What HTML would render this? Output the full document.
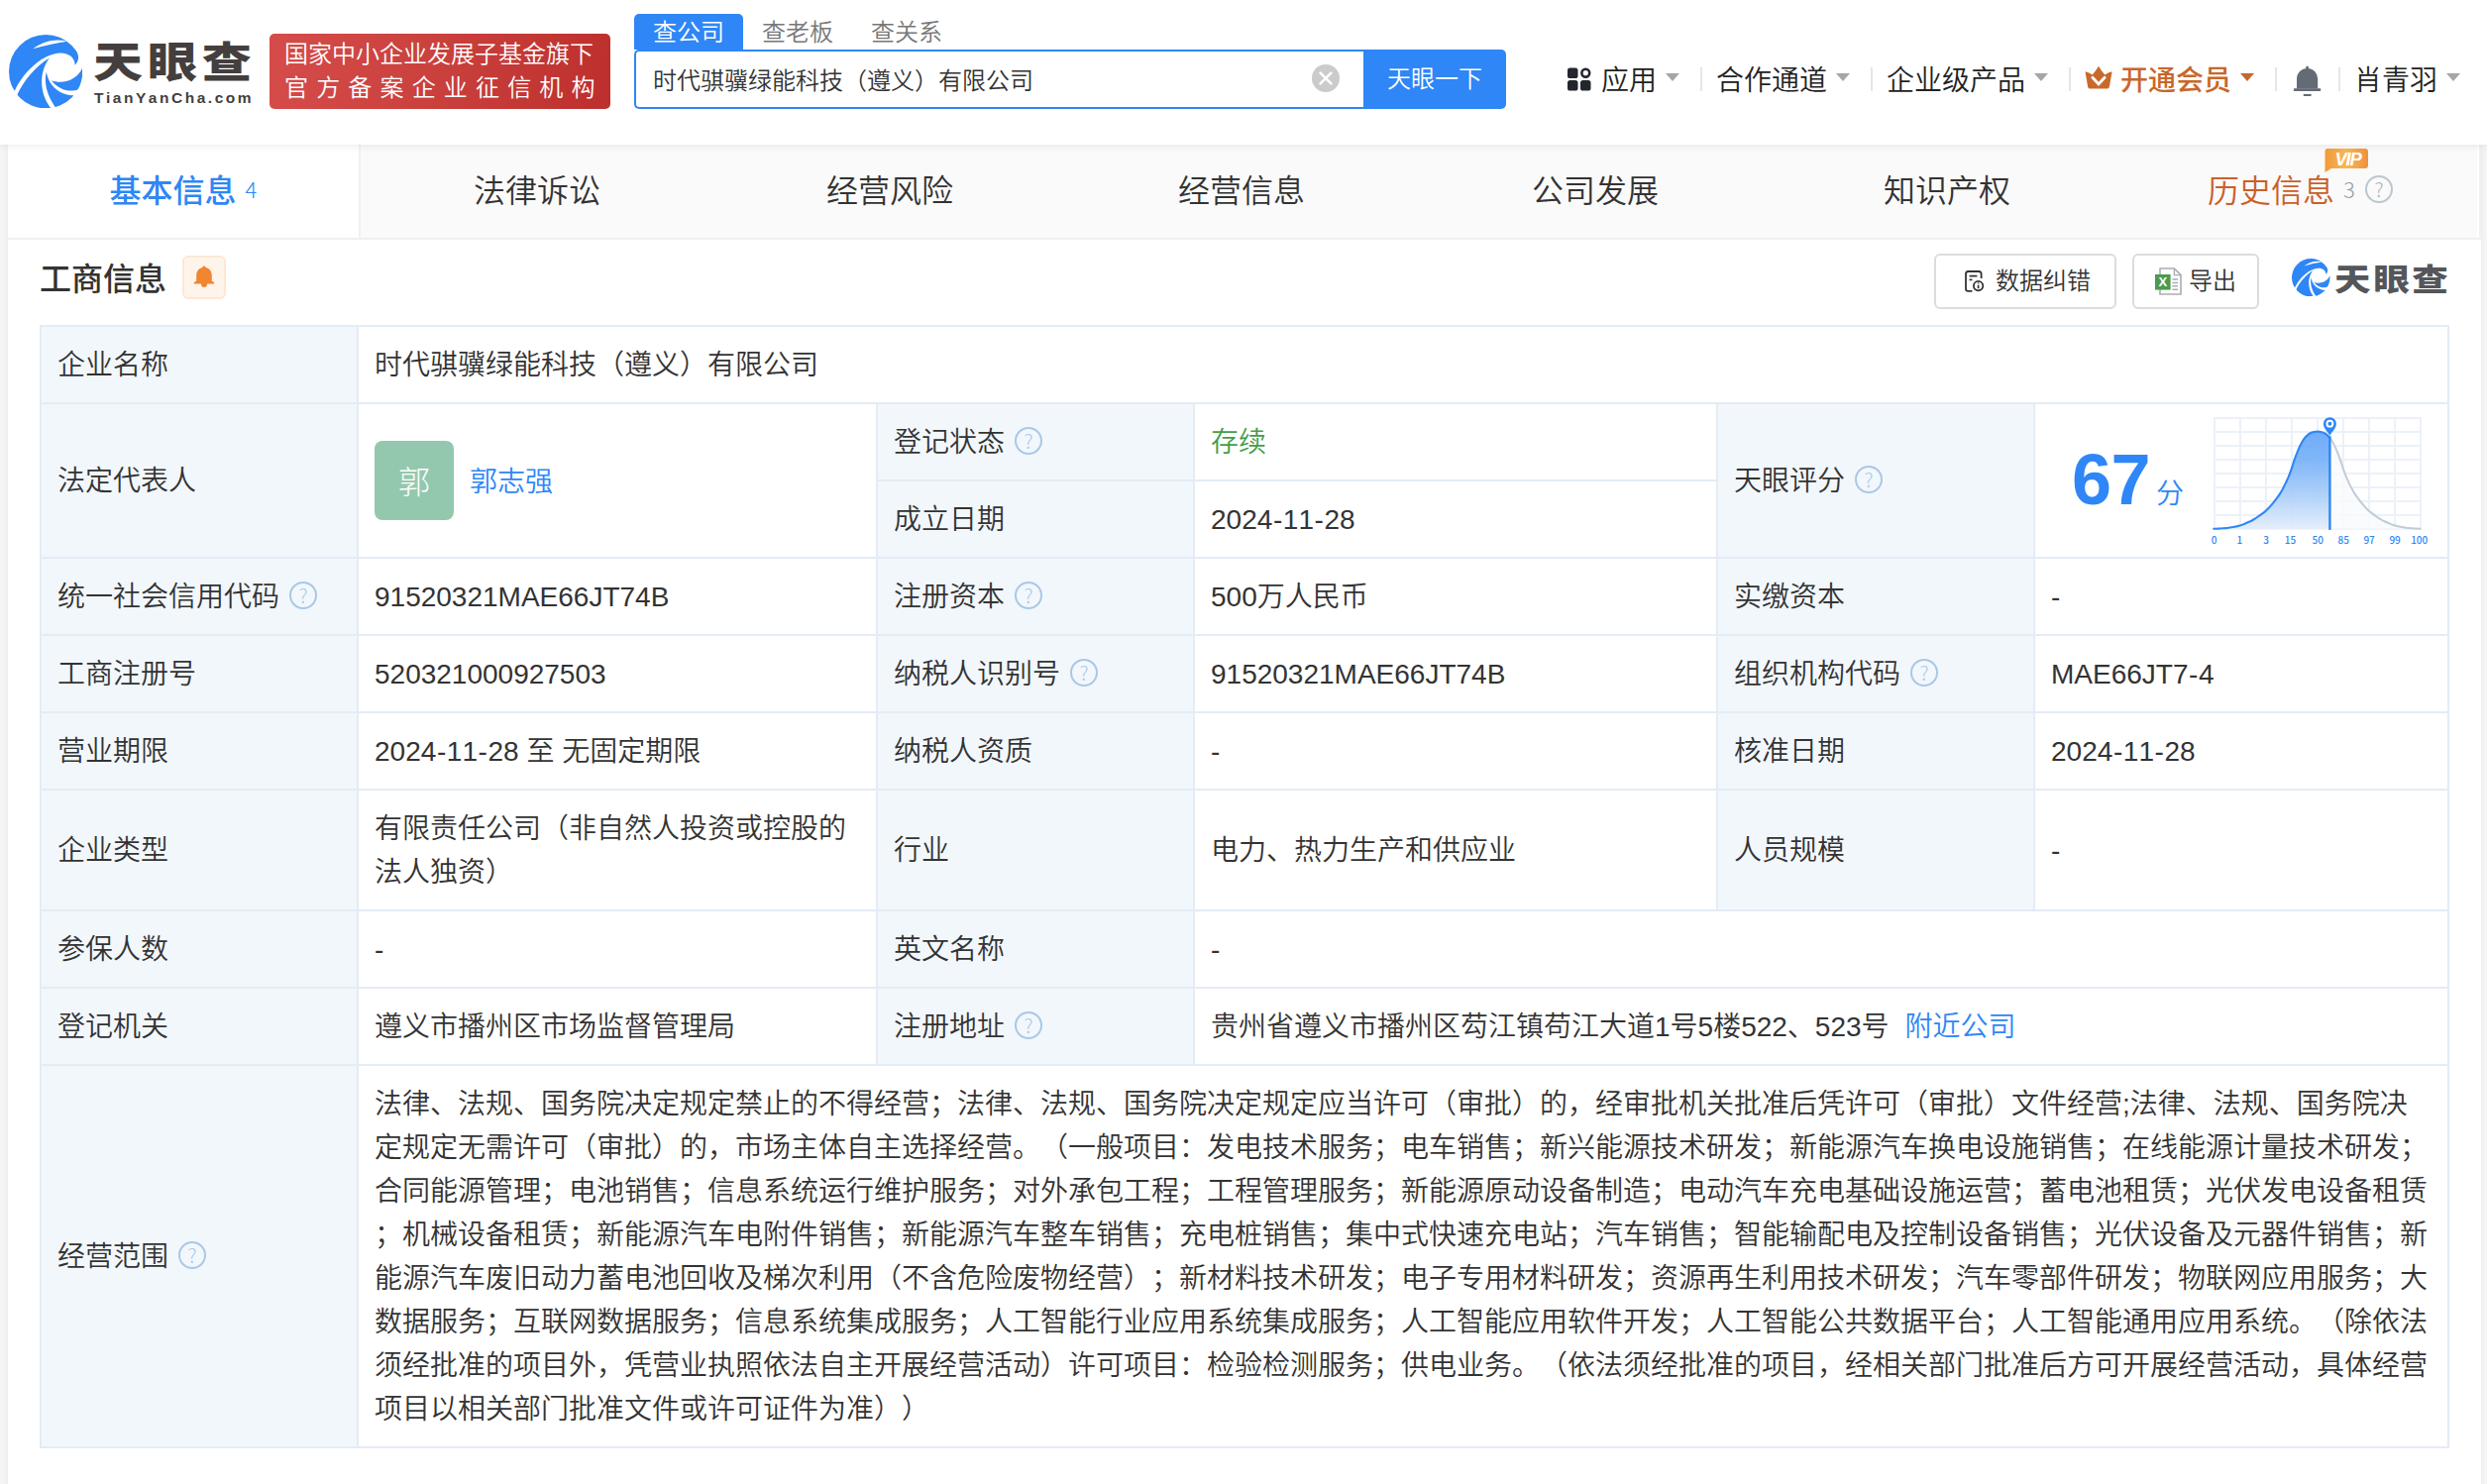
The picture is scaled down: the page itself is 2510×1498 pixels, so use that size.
<!DOCTYPE html>
<html lang="zh-CN">
<head>
<meta charset="utf-8">
<title>时代骐骥绿能科技（遵义）有限公司 - 天眼查</title>
<style>
*{box-sizing:border-box;margin:0;padding:0}
html,body{width:2510px;height:1498px;overflow:hidden}
body{text-spacing-trim:space-all;font-kerning:none;background:#f6f6f6;font-family:"Liberation Sans","Noto Sans CJK SC DemiLight","Noto Sans CJK SC",sans-serif;color:#333;position:relative;-webkit-font-smoothing:antialiased}
.abs{position:absolute;white-space:nowrap}
/* header */
#hd{position:absolute;left:0;top:0;width:2510px;height:146px;background:#fff;box-shadow:0 2px 7px rgba(0,0,0,.07);z-index:5}
.logotxt{left:94px;top:25.5px;font-size:42.5px;line-height:68px;font-weight:900;color:#443f3e;letter-spacing:4px;transform-origin:0 50%;transform:scaleX(1.18);font-family:"Noto Sans CJK SC",sans-serif}
.logosub{left:95px;top:88px;font-size:15.5px;line-height:22px;font-weight:700;color:#443f3e;letter-spacing:2.53px}
#red{position:absolute;left:272px;top:34px;width:344px;height:76px;border-radius:5px;background:linear-gradient(100deg,#d64c4a 0%,#c9403d 50%,#bd2f2d 100%);color:#fff;font-size:24px}
#red div{position:absolute;left:15px;white-space:nowrap;line-height:34px}
.stab{top:14px;width:110px;height:36px;line-height:37px;text-align:center;font-size:24px;color:#777}
.stab.on{background:#2f86f6;color:#fff;border-radius:5px 5px 0 0}
#sbox{position:absolute;left:640px;top:50px;width:738px;height:60px;border:2px solid #2f86f6;border-right:0;border-radius:5px 0 0 5px;background:#fff;font-size:24px;line-height:60px;padding-left:17px;white-space:nowrap;color:#333}
#sbtn{position:absolute;left:1376px;top:50px;width:144px;height:60px;background:#2f86f6;border-radius:0 5px 5px 0;color:#fff;font-size:24px;line-height:59px;text-align:center}
.nav{top:60px;font-size:28px;line-height:44px;color:#222}
.sep{position:absolute;top:68px;width:2px;height:24px;background:#e3e6ec}
.car{position:absolute;top:74.4px;width:0;height:0;border-left:7px solid transparent;border-right:7px solid transparent;border-top:8.8px solid #a6a6a6}
/* tabs */
#tabs{position:absolute;left:8px;top:146px;width:2496px;height:96px;background:#fafafa;border-bottom:2px solid #f0f0f0;border-right:2px solid #f0f0f0}
#tabs:after{content:"";position:absolute;left:2492px;top:0;width:2px;height:94px;background:#fff}
.tab{position:absolute;top:0;height:94px;line-height:94px;text-align:center;font-size:32px;color:#333;white-space:nowrap}
.tab.on{left:0;width:356px;background:#fff;border-right:2px solid #f0f0f0;color:#2f86f6;font-weight:500;font-family:"Liberation Sans","Noto Sans CJK SC",sans-serif}
#main{position:absolute;left:8px;top:242px;width:2496px;height:1270px;background:#fff}
#wrap{position:absolute;left:8px;top:146px;width:2496px;height:1366px;background:#fff;box-shadow:0 0 7px rgba(0,0,0,.07)}
/* table */
table{position:absolute;left:40px;top:328px;width:2430px;border-collapse:collapse;table-layout:fixed;font-size:28px;line-height:44px}
td{border:2px solid #e4ecf5;padding:17px 16px 15px;vertical-align:middle;background:#fff;color:#333;white-space:nowrap;overflow:hidden}
td.l{background:#f2f7fc}
.q{display:inline-block;width:28px;height:28px;border:2px solid #a9c8e6;border-radius:50%;vertical-align:top;margin:6px 0 0 10px;color:#a9c8e6;font-size:20px;line-height:24px;height:28px;text-align:center;font-weight:300;font-style:normal;font-family:"Noto Sans CJK SC",sans-serif;overflow:hidden}
a{color:#2f86f6;text-decoration:none}
.h{margin:0 .6px}
</style>
</head>
<body>
<div id="hd">
<svg class="abs" style="left:8.7px;top:34.7px" width="74.4" height="74.4" viewBox="140 140 1200 1200"><defs><clipPath id="lc"><circle cx="740" cy="740" r="600"/></clipPath></defs><g clip-path="url(#lc)" fill="#2f86f6"><path d="M235,1050 L0,1050 L0,0 L1100,0 L1080,250 C1180,300 1260,380 1270,500 C1272,560 1250,600 1215,635 C1215,520 1120,440 980,440 C700,450 400,720 235,1050Z"/><path d="M530,370 C700,245 900,195 1090,248 C900,278 720,312 530,370Z" fill="#fff"/><path d="M800,520 C600,640 380,880 275,1120 L200,1500 L820,1500 L820,1335 C640,1100 620,760 800,520Z"/><path d="M1335,680 C1270,850 1050,960 830,885 C950,1030 1130,1090 1265,1030 L1500,1030 L1500,680Z"/><path d="M750,745 C700,950 780,1150 895,1320 L895,1500 L1300,1500 L1195,1130 C1000,1130 790,1000 750,745Z"/></g></svg>
<div class="abs logotxt">天眼查</div>
<div class="abs logosub">TianYanCha.com</div>
<div id="red"><div style="top:4px">国家中小企业发展子基金旗下</div><div style="top:37.5px;letter-spacing:8.17px">官方备案企业征信机构</div></div>
<div class="abs stab on" style="left:640px">查公司</div>
<div class="abs stab" style="left:750px">查老板</div>
<div class="abs stab" style="left:860px">查关系</div>
<div id="sbox">时代骐骥绿能科技（遵义）有限公司</div>
<svg class="abs" style="left:1324px;top:65px" width="28" height="28" viewBox="0 0 28 28"><circle cx="14" cy="14" r="14" fill="#cbcbcb"/><path d="M8.6 8.6L19.4 19.4M19.4 8.6L8.6 19.4" stroke="#fff" stroke-width="2.6" stroke-linecap="round"/></svg>
<div id="sbtn">天眼一下</div>
<svg class="abs" style="left:1582px;top:68px" width="24" height="24" viewBox="0 0 24 24"><rect x="0" y="0.5" width="10.5" height="10.5" rx="2.6" fill="#23262d"/><rect x="0" y="13" width="10.5" height="10.5" rx="2.6" fill="#23262d"/><rect x="13" y="13" width="10.5" height="10.5" rx="2.6" fill="#23262d"/><circle cx="18.3" cy="5.7" r="3.9" fill="none" stroke="#23262d" stroke-width="2.6"/></svg>
<div class="abs nav" style="left:1616px">应用</div><i class="car" style="left:1681px"></i><i class="sep" style="left:1716px"></i>
<div class="abs nav" style="left:1732px">合作通道</div><i class="car" style="left:1853px"></i><i class="sep" style="left:1888px"></i>
<div class="abs nav" style="left:1904px">企业级产品</div><i class="car" style="left:2053px"></i><i class="sep" style="left:2088px"></i>
<svg class="abs" style="left:2104px;top:66px" width="28" height="24" viewBox="0 0 28 24"><path d="M0.5 6.2 Q4.6 7.2 7.7 9.4 Q11.4 5.6 14 0.8 Q16.6 5.6 20.3 9.4 Q23.4 7.2 27.6 6.2 L24.9 21.4 Q24.5 23.6 22.4 23.6 L5.6 23.6 Q3.5 23.6 3.1 21.4Z" fill="#c8692b"/><path d="M7.9 12.3 L14 18.9 L20.1 12.3" fill="none" stroke="#fff" stroke-width="2.9" stroke-linecap="round" stroke-linejoin="miter"/></svg>
<div class="abs nav" style="left:2140px;top:57px;color:#c8672a;font-weight:500;font-family:'Noto Sans CJK SC',sans-serif">开通会员</div><i class="car" style="left:2261px;border-top-color:#c8672a"></i><i class="sep" style="left:2296px"></i>
<svg class="abs" style="left:2314px;top:66px" width="30" height="32" viewBox="0 0 30 32"><path d="M4 23.6 V13.6 A10.6 10.6 0 0 1 25.2 13.6 V23.6Z" fill="#636b76"/><rect x="0.9" y="23.2" width="27.3" height="2.7" rx="0.6" fill="#636b76"/><rect x="13.3" y="0.8" width="2.6" height="3.4" rx="1" fill="#636b76"/><rect x="10.7" y="29" width="7.9" height="1.9" rx="0.4" fill="#636b76"/></svg>
<i class="sep" style="left:2360px"></i>
<div class="abs nav" style="left:2376px">肖青羽</div><i class="car" style="left:2469px"></i>
</div>
<div id="wrap"></div>
<div id="tabs">
<div class="tab on">基本信息<span style="font-family:'Noto Sans CJK SC',sans-serif;font-weight:300;font-size:22px;margin-left:9px;position:relative;top:-4px">4</span></div>
<div class="tab" style="left:356px;width:356px">法律诉讼</div>
<div class="tab" style="left:712px;width:356px">经营风险</div>
<div class="tab" style="left:1067px;width:356px">经营信息</div>
<div class="tab" style="left:1424px;width:356px">公司发展</div>
<div class="tab" style="left:1779px;width:356px">知识产权</div>
<div class="tab" style="left:2220px;width:auto;color:#c8602a">历史信息<span style="font-family:'Noto Sans CJK SC',sans-serif;font-weight:300;font-size:22px;margin-left:9px;color:#999;position:relative;top:-4px">3</span></div>
<div class="abs" style="left:2379px;top:31px;width:28px;height:28px;border:2px solid #bcc6cf;border-radius:50%;color:#a8b0b8;font-size:20px;line-height:24px;text-align:center;font-family:'Noto Sans CJK SC',sans-serif;font-weight:300">?</div>
<svg class="abs" style="left:2338px;top:3px" width="46" height="26" viewBox="0 0 46 26"><defs><linearGradient id="vg" x1="0" y1="0" x2="1" y2="0"><stop offset="0" stop-color="#f09a3c"/><stop offset=".5" stop-color="#f8b856"/><stop offset="1" stop-color="#f0913c"/></linearGradient></defs><path d="M3 1 H41 Q44 1 44 4 V18 Q44 21 41 21 H7 L0.5 25 V4 Q0.5 1 3 1Z" fill="url(#vg)"/><text x="23.5" y="17.6" text-anchor="middle" font-family="Liberation Sans,sans-serif" font-weight="700" font-style="italic" font-size="18.5" letter-spacing="-1.2" fill="#fff">VIP</text></svg>
</div>
<div id="main">
<div class="abs" style="left:32px;top:14px;font-size:32px;line-height:46px;font-weight:500;color:#333;font-family:'Noto Sans CJK SC',sans-serif">工商信息</div>
<div class="abs" style="left:176px;top:16px;width:44px;height:44px;border:2px solid #fde8d5;border-radius:6px;background:#fef4ea"></div>
<svg class="abs" style="left:187px;top:25.6px" width="22" height="24" viewBox="0 0 22 24"><path d="M11 0.6 C11.9 0.6 12.5 1.2 12.6 2 C16.4 2.8 18.8 6 18.8 10 L18.8 15.8 L20.4 16.6 Q21.2 17 21.2 17.8 L21.2 18.6 L0.8 18.6 L0.8 17.8 Q0.8 17 1.6 16.6 L3.2 15.8 L3.2 10 C3.2 6 5.6 2.8 9.4 2 C9.5 1.2 10.1 0.6 11 0.6Z M7.8 18.4 L14.2 18.4 C14 20.6 12.8 22 11 22 C9.2 22 8 20.6 7.8 18.4Z" fill="#f08632"/></svg>
<div class="abs" style="left:1944px;top:14px;width:184px;height:56px;border:2px solid #dcdcdc;border-radius:6px"></div>
<svg class="abs" style="left:1975px;top:31px" width="20" height="22" viewBox="0 0 20 22"><path d="M16.6 8 V3.4 Q16.6 1 14.2 1 H3.4 Q1 1 1 3.4 V18.4 Q1 20.8 3.4 20.8 H7.4" fill="none" stroke="#333" stroke-width="1.8"/><path d="M4.6 5.6 H12.4 M4.6 9.4 H7.4" stroke="#333" stroke-width="1.8"/><circle cx="13.6" cy="15.6" r="4.7" fill="none" stroke="#333" stroke-width="1.8"/><path d="M13.6 14.8 V18.2 M13.6 12.6 V13.6" stroke="#333" stroke-width="1.7"/></svg>
<div class="abs" style="left:2006px;top:20px;font-size:24px;line-height:44px;color:#333">数据纠错</div>
<div class="abs" style="left:2144px;top:14px;width:128px;height:56px;border:2px solid #dcdcdc;border-radius:6px"></div>
<svg class="abs" style="left:2167px;top:28px" width="27" height="28" viewBox="0 0 27 28"><path d="M5 1 H19.4 L26 7.6 V27 H5Z" fill="#fff" stroke="#a9adb3" stroke-width="1.6"/><path d="M19.4 1 V7.6 H26" fill="none" stroke="#a9adb3" stroke-width="1.4"/><path d="M17.4 12 H23 M17.4 15.4 H23 M17.4 18.8 H23 M17.4 22.2 H23" stroke="#a9adb3" stroke-width="1.5"/><rect x="0" y="7" width="15.6" height="15.6" fill="#4a9a4f"/><text x="7.8" y="19.4" text-anchor="middle" font-family="Liberation Sans,sans-serif" font-weight="700" font-size="13" fill="#fff">X</text></svg>
<div class="abs" style="left:2201px;top:20px;font-size:24px;line-height:44px;color:#333">导出</div>
<svg class="abs" style="left:2305px;top:18.8px" width="38.5" height="38.5" viewBox="140 140 1200 1200"><g clip-path="url(#lc)" fill="#2f86f6"><path d="M235,1050 L0,1050 L0,0 L1100,0 L1080,250 C1180,300 1260,380 1270,500 C1272,560 1250,600 1215,635 C1215,520 1120,440 980,440 C700,450 400,720 235,1050Z"/><path d="M530,370 C700,245 900,195 1090,248 C900,278 720,312 530,370Z" fill="#fff"/><path d="M800,520 C600,640 380,880 275,1120 L200,1500 L820,1500 L820,1335 C640,1100 620,760 800,520Z"/><path d="M1335,680 C1270,850 1050,960 830,885 C950,1030 1130,1090 1265,1030 L1500,1030 L1500,680Z"/><path d="M750,745 C700,950 780,1150 895,1320 L895,1500 L1300,1500 L1195,1130 C1000,1130 790,1000 750,745Z"/></g></svg>
<div class="abs" style="left:2348px;top:7px;font-size:31px;line-height:62px;font-weight:900;color:#55565a;letter-spacing:2.2px;transform-origin:0 50%;transform:scaleX(1.18);font-family:'Noto Sans CJK SC',sans-serif">天眼查</div>
</div>
<table id="tb"><colgroup><col style="width:320px"><col style="width:524px"><col style="width:320px"><col style="width:528px"><col style="width:320px"><col style="width:418px"></colgroup>
<tr><td class="l">企业名称</td><td colspan="5">时代骐骥绿能科技（遵义）有限公司</td></tr>
<tr><td class="l" rowspan="2">法定代表人</td><td rowspan="2" style="padding-top:0;padding-bottom:0"><span style="display:inline-block;width:80px;height:80px;border-radius:8px;background:#93c8af;color:#fff;font-size:32px;line-height:78px;text-align:center;vertical-align:middle;font-weight:300;font-family:'Noto Sans CJK SC',sans-serif">郭</span><a style="margin-left:16px;vertical-align:middle;position:relative;top:2px">郭志强</a></td><td class="l">登记状态<i class="q">?</i></td><td style="color:#459c49">存续</td><td class="l" rowspan="2">天眼评分<i class="q">?</i></td><td rowspan="2" style="position:relative;padding:0;height:154px"><span class="abs" style="left:37px;top:34px;font-size:72px;line-height:84px;font-weight:700;color:#2f86f6;letter-spacing:-0.5px">67</span><span class="abs" style="left:122px;top:69px;font-size:28px;line-height:44px;color:#2f86f6">分</span><svg class="abs" style="left:0;top:0;overflow:visible" width="418" height="154" viewBox="0 0 418 154"><defs><linearGradient id="cg" x1="0" y1="27.3" x2="0" y2="125.8" gradientUnits="userSpaceOnUse"><stop offset="0" stop-color="#63a5f8"/><stop offset=".3" stop-color="#76b1f8"/><stop offset=".65" stop-color="#a9cdf9"/><stop offset="1" stop-color="#e2edfb"/></linearGradient><clipPath id="cl"><rect x="0" y="0" width="297.4" height="154"/></clipPath><clipPath id="cr"><rect x="297.4" y="0" width="200" height="154"/></clipPath></defs>
<g stroke="#ecf1f9" stroke-width="2" fill="none"><path d="M180.9 13.1V126.8 M206.9 13.1V126.8 M232.9 13.1V126.8 M258.9 13.1V126.8 M284.9 13.1V126.8 M310.9 13.1V126.8 M336.9 13.1V126.8 M362.9 13.1V126.8 M388.9 13.1V126.8"/><path d="M179.9 14.1H389.9 M179.9 28.1H389.9 M179.9 42.1H389.9 M179.9 56.0H389.9 M179.9 70.0H389.9 M179.9 83.9H389.9 M179.9 97.9H389.9 M179.9 111.9H389.9 M179.9 125.8H389.9"/></g>
<path d="M180.2 125.8 C180.7 125.8 182.2 125.7 183.2 125.7 C184.2 125.6 185.2 125.6 186.2 125.5 C187.2 125.5 188.2 125.4 189.3 125.3 C190.3 125.3 191.3 125.2 192.3 125.1 C193.3 125.0 194.3 124.9 195.3 124.7 C196.3 124.6 197.3 124.4 198.3 124.2 C199.4 124.1 200.4 123.9 201.4 123.7 C202.4 123.5 203.4 123.3 204.4 123.1 C205.4 122.9 206.4 122.6 207.4 122.3 C208.5 121.9 209.5 121.5 210.5 121.1 C211.5 120.7 212.5 120.2 213.5 119.8 C214.5 119.4 215.5 119.0 216.5 118.5 C217.6 118.0 218.6 117.6 219.6 117.0 C220.6 116.4 221.6 115.8 222.6 115.1 C223.6 114.5 224.6 113.7 225.6 113.0 C226.7 112.3 227.7 111.7 228.7 110.9 C229.7 110.2 230.7 109.5 231.7 108.6 C232.7 107.8 233.7 106.8 234.7 105.8 C235.8 104.7 236.8 103.6 237.8 102.4 C238.8 101.3 239.8 100.1 240.8 98.9 C241.8 97.6 242.8 96.3 243.8 94.9 C244.9 93.6 245.9 92.1 246.9 90.6 C247.9 89.0 248.9 87.2 249.9 85.4 C250.9 83.5 251.9 81.6 252.9 79.4 C253.9 77.3 255.0 75.1 256.0 72.6 C257.0 70.1 258.0 67.2 259.0 64.3 C260.0 61.4 261.0 58.1 262.0 55.2 C263.0 52.3 264.1 49.5 265.1 47.1 C266.1 44.6 267.1 42.5 268.1 40.6 C269.1 38.7 270.1 36.9 271.1 35.4 C272.1 34.0 273.2 32.8 274.2 31.9 C275.2 30.9 276.2 30.1 277.2 29.5 C278.2 28.9 279.2 28.5 280.2 28.2 C281.2 27.9 282.3 27.8 283.3 27.7 C284.3 27.6 285.3 27.6 286.3 27.7 C287.3 27.8 288.3 27.9 289.3 28.2 C290.3 28.5 291.4 28.9 292.4 29.5 C293.4 30.1 294.4 30.9 295.4 31.9 C296.4 32.8 297.4 34.0 298.4 35.4 C299.4 36.9 300.5 38.7 301.5 40.6 C302.5 42.5 303.5 44.6 304.5 47.1 C305.5 49.5 306.5 52.3 307.5 55.2 C308.5 58.1 309.6 61.4 310.6 64.3 C311.6 67.2 312.6 70.1 313.6 72.6 C314.6 75.1 315.6 77.3 316.6 79.4 C317.6 81.6 318.6 83.5 319.7 85.4 C320.7 87.2 321.7 89.0 322.7 90.6 C323.7 92.1 324.7 93.6 325.7 94.9 C326.7 96.3 327.7 97.6 328.8 98.9 C329.8 100.1 330.8 101.3 331.8 102.4 C332.8 103.6 333.8 104.7 334.8 105.8 C335.8 106.8 336.8 107.8 337.9 108.6 C338.9 109.5 339.9 110.2 340.9 110.9 C341.9 111.7 342.9 112.3 343.9 113.0 C344.9 113.7 345.9 114.5 347.0 115.1 C348.0 115.8 349.0 116.4 350.0 117.0 C351.0 117.6 352.0 118.0 353.0 118.5 C354.0 119.0 355.0 119.4 356.1 119.8 C357.1 120.2 358.1 120.7 359.1 121.1 C360.1 121.5 361.1 121.9 362.1 122.3 C363.1 122.6 364.1 122.9 365.2 123.1 C366.2 123.3 367.2 123.5 368.2 123.7 C369.2 123.9 370.2 124.1 371.2 124.2 C372.2 124.4 373.2 124.6 374.2 124.7 C375.3 124.9 376.3 125.0 377.3 125.1 C378.3 125.2 379.3 125.3 380.3 125.3 C381.3 125.4 382.3 125.5 383.3 125.5 C384.4 125.6 385.4 125.6 386.4 125.7 C387.4 125.7 388.9 125.8 389.4 125.8 Z" fill="#f9fafb" clip-path="url(#cr)" opacity=".85"/>
<path d="M180.2 125.8 C180.7 125.8 182.2 125.7 183.2 125.7 C184.2 125.6 185.2 125.6 186.2 125.5 C187.2 125.5 188.2 125.4 189.3 125.3 C190.3 125.3 191.3 125.2 192.3 125.1 C193.3 125.0 194.3 124.9 195.3 124.7 C196.3 124.6 197.3 124.4 198.3 124.2 C199.4 124.1 200.4 123.9 201.4 123.7 C202.4 123.5 203.4 123.3 204.4 123.1 C205.4 122.9 206.4 122.6 207.4 122.3 C208.5 121.9 209.5 121.5 210.5 121.1 C211.5 120.7 212.5 120.2 213.5 119.8 C214.5 119.4 215.5 119.0 216.5 118.5 C217.6 118.0 218.6 117.6 219.6 117.0 C220.6 116.4 221.6 115.8 222.6 115.1 C223.6 114.5 224.6 113.7 225.6 113.0 C226.7 112.3 227.7 111.7 228.7 110.9 C229.7 110.2 230.7 109.5 231.7 108.6 C232.7 107.8 233.7 106.8 234.7 105.8 C235.8 104.7 236.8 103.6 237.8 102.4 C238.8 101.3 239.8 100.1 240.8 98.9 C241.8 97.6 242.8 96.3 243.8 94.9 C244.9 93.6 245.9 92.1 246.9 90.6 C247.9 89.0 248.9 87.2 249.9 85.4 C250.9 83.5 251.9 81.6 252.9 79.4 C253.9 77.3 255.0 75.1 256.0 72.6 C257.0 70.1 258.0 67.2 259.0 64.3 C260.0 61.4 261.0 58.1 262.0 55.2 C263.0 52.3 264.1 49.5 265.1 47.1 C266.1 44.6 267.1 42.5 268.1 40.6 C269.1 38.7 270.1 36.9 271.1 35.4 C272.1 34.0 273.2 32.8 274.2 31.9 C275.2 30.9 276.2 30.1 277.2 29.5 C278.2 28.9 279.2 28.5 280.2 28.2 C281.2 27.9 282.3 27.8 283.3 27.7 C284.3 27.6 285.3 27.6 286.3 27.7 C287.3 27.8 288.3 27.9 289.3 28.2 C290.3 28.5 291.4 28.9 292.4 29.5 C293.4 30.1 294.4 30.9 295.4 31.9 C296.4 32.8 297.4 34.0 298.4 35.4 C299.4 36.9 300.5 38.7 301.5 40.6 C302.5 42.5 303.5 44.6 304.5 47.1 C305.5 49.5 306.5 52.3 307.5 55.2 C308.5 58.1 309.6 61.4 310.6 64.3 C311.6 67.2 312.6 70.1 313.6 72.6 C314.6 75.1 315.6 77.3 316.6 79.4 C317.6 81.6 318.6 83.5 319.7 85.4 C320.7 87.2 321.7 89.0 322.7 90.6 C323.7 92.1 324.7 93.6 325.7 94.9 C326.7 96.3 327.7 97.6 328.8 98.9 C329.8 100.1 330.8 101.3 331.8 102.4 C332.8 103.6 333.8 104.7 334.8 105.8 C335.8 106.8 336.8 107.8 337.9 108.6 C338.9 109.5 339.9 110.2 340.9 110.9 C341.9 111.7 342.9 112.3 343.9 113.0 C344.9 113.7 345.9 114.5 347.0 115.1 C348.0 115.8 349.0 116.4 350.0 117.0 C351.0 117.6 352.0 118.0 353.0 118.5 C354.0 119.0 355.0 119.4 356.1 119.8 C357.1 120.2 358.1 120.7 359.1 121.1 C360.1 121.5 361.1 121.9 362.1 122.3 C363.1 122.6 364.1 122.9 365.2 123.1 C366.2 123.3 367.2 123.5 368.2 123.7 C369.2 123.9 370.2 124.1 371.2 124.2 C372.2 124.4 373.2 124.6 374.2 124.7 C375.3 124.9 376.3 125.0 377.3 125.1 C378.3 125.2 379.3 125.3 380.3 125.3 C381.3 125.4 382.3 125.5 383.3 125.5 C384.4 125.6 385.4 125.6 386.4 125.7 C387.4 125.7 388.9 125.8 389.4 125.8" fill="none" stroke="#bfccd8" stroke-width="2" clip-path="url(#cr)"/>
<path d="M180.2 125.8 C180.7 125.8 182.2 125.7 183.2 125.7 C184.2 125.6 185.2 125.6 186.2 125.5 C187.2 125.5 188.2 125.4 189.3 125.3 C190.3 125.3 191.3 125.2 192.3 125.1 C193.3 125.0 194.3 124.9 195.3 124.7 C196.3 124.6 197.3 124.4 198.3 124.2 C199.4 124.1 200.4 123.9 201.4 123.7 C202.4 123.5 203.4 123.3 204.4 123.1 C205.4 122.9 206.4 122.6 207.4 122.3 C208.5 121.9 209.5 121.5 210.5 121.1 C211.5 120.7 212.5 120.2 213.5 119.8 C214.5 119.4 215.5 119.0 216.5 118.5 C217.6 118.0 218.6 117.6 219.6 117.0 C220.6 116.4 221.6 115.8 222.6 115.1 C223.6 114.5 224.6 113.7 225.6 113.0 C226.7 112.3 227.7 111.7 228.7 110.9 C229.7 110.2 230.7 109.5 231.7 108.6 C232.7 107.8 233.7 106.8 234.7 105.8 C235.8 104.7 236.8 103.6 237.8 102.4 C238.8 101.3 239.8 100.1 240.8 98.9 C241.8 97.6 242.8 96.3 243.8 94.9 C244.9 93.6 245.9 92.1 246.9 90.6 C247.9 89.0 248.9 87.2 249.9 85.4 C250.9 83.5 251.9 81.6 252.9 79.4 C253.9 77.3 255.0 75.1 256.0 72.6 C257.0 70.1 258.0 67.2 259.0 64.3 C260.0 61.4 261.0 58.1 262.0 55.2 C263.0 52.3 264.1 49.5 265.1 47.1 C266.1 44.6 267.1 42.5 268.1 40.6 C269.1 38.7 270.1 36.9 271.1 35.4 C272.1 34.0 273.2 32.8 274.2 31.9 C275.2 30.9 276.2 30.1 277.2 29.5 C278.2 28.9 279.2 28.5 280.2 28.2 C281.2 27.9 282.3 27.8 283.3 27.7 C284.3 27.6 285.3 27.6 286.3 27.7 C287.3 27.8 288.3 27.9 289.3 28.2 C290.3 28.5 291.4 28.9 292.4 29.5 C293.4 30.1 294.4 30.9 295.4 31.9 C296.4 32.8 297.4 34.0 298.4 35.4 C299.4 36.9 300.5 38.7 301.5 40.6 C302.5 42.5 303.5 44.6 304.5 47.1 C305.5 49.5 306.5 52.3 307.5 55.2 C308.5 58.1 309.6 61.4 310.6 64.3 C311.6 67.2 312.6 70.1 313.6 72.6 C314.6 75.1 315.6 77.3 316.6 79.4 C317.6 81.6 318.6 83.5 319.7 85.4 C320.7 87.2 321.7 89.0 322.7 90.6 C323.7 92.1 324.7 93.6 325.7 94.9 C326.7 96.3 327.7 97.6 328.8 98.9 C329.8 100.1 330.8 101.3 331.8 102.4 C332.8 103.6 333.8 104.7 334.8 105.8 C335.8 106.8 336.8 107.8 337.9 108.6 C338.9 109.5 339.9 110.2 340.9 110.9 C341.9 111.7 342.9 112.3 343.9 113.0 C344.9 113.7 345.9 114.5 347.0 115.1 C348.0 115.8 349.0 116.4 350.0 117.0 C351.0 117.6 352.0 118.0 353.0 118.5 C354.0 119.0 355.0 119.4 356.1 119.8 C357.1 120.2 358.1 120.7 359.1 121.1 C360.1 121.5 361.1 121.9 362.1 122.3 C363.1 122.6 364.1 122.9 365.2 123.1 C366.2 123.3 367.2 123.5 368.2 123.7 C369.2 123.9 370.2 124.1 371.2 124.2 C372.2 124.4 373.2 124.6 374.2 124.7 C375.3 124.9 376.3 125.0 377.3 125.1 C378.3 125.2 379.3 125.3 380.3 125.3 C381.3 125.4 382.3 125.5 383.3 125.5 C384.4 125.6 385.4 125.6 386.4 125.7 C387.4 125.7 388.9 125.8 389.4 125.8 Z" fill="url(#cg)" clip-path="url(#cl)" opacity=".92"/>
<path d="M180.2 125.8 C180.7 125.8 182.2 125.7 183.2 125.7 C184.2 125.6 185.2 125.6 186.2 125.5 C187.2 125.5 188.2 125.4 189.3 125.3 C190.3 125.3 191.3 125.2 192.3 125.1 C193.3 125.0 194.3 124.9 195.3 124.7 C196.3 124.6 197.3 124.4 198.3 124.2 C199.4 124.1 200.4 123.9 201.4 123.7 C202.4 123.5 203.4 123.3 204.4 123.1 C205.4 122.9 206.4 122.6 207.4 122.3 C208.5 121.9 209.5 121.5 210.5 121.1 C211.5 120.7 212.5 120.2 213.5 119.8 C214.5 119.4 215.5 119.0 216.5 118.5 C217.6 118.0 218.6 117.6 219.6 117.0 C220.6 116.4 221.6 115.8 222.6 115.1 C223.6 114.5 224.6 113.7 225.6 113.0 C226.7 112.3 227.7 111.7 228.7 110.9 C229.7 110.2 230.7 109.5 231.7 108.6 C232.7 107.8 233.7 106.8 234.7 105.8 C235.8 104.7 236.8 103.6 237.8 102.4 C238.8 101.3 239.8 100.1 240.8 98.9 C241.8 97.6 242.8 96.3 243.8 94.9 C244.9 93.6 245.9 92.1 246.9 90.6 C247.9 89.0 248.9 87.2 249.9 85.4 C250.9 83.5 251.9 81.6 252.9 79.4 C253.9 77.3 255.0 75.1 256.0 72.6 C257.0 70.1 258.0 67.2 259.0 64.3 C260.0 61.4 261.0 58.1 262.0 55.2 C263.0 52.3 264.1 49.5 265.1 47.1 C266.1 44.6 267.1 42.5 268.1 40.6 C269.1 38.7 270.1 36.9 271.1 35.4 C272.1 34.0 273.2 32.8 274.2 31.9 C275.2 30.9 276.2 30.1 277.2 29.5 C278.2 28.9 279.2 28.5 280.2 28.2 C281.2 27.9 282.3 27.8 283.3 27.7 C284.3 27.6 285.3 27.6 286.3 27.7 C287.3 27.8 288.3 27.9 289.3 28.2 C290.3 28.5 291.4 28.9 292.4 29.5 C293.4 30.1 294.4 30.9 295.4 31.9 C296.4 32.8 297.4 34.0 298.4 35.4 C299.4 36.9 300.5 38.7 301.5 40.6 C302.5 42.5 303.5 44.6 304.5 47.1 C305.5 49.5 306.5 52.3 307.5 55.2 C308.5 58.1 309.6 61.4 310.6 64.3 C311.6 67.2 312.6 70.1 313.6 72.6 C314.6 75.1 315.6 77.3 316.6 79.4 C317.6 81.6 318.6 83.5 319.7 85.4 C320.7 87.2 321.7 89.0 322.7 90.6 C323.7 92.1 324.7 93.6 325.7 94.9 C326.7 96.3 327.7 97.6 328.8 98.9 C329.8 100.1 330.8 101.3 331.8 102.4 C332.8 103.6 333.8 104.7 334.8 105.8 C335.8 106.8 336.8 107.8 337.9 108.6 C338.9 109.5 339.9 110.2 340.9 110.9 C341.9 111.7 342.9 112.3 343.9 113.0 C344.9 113.7 345.9 114.5 347.0 115.1 C348.0 115.8 349.0 116.4 350.0 117.0 C351.0 117.6 352.0 118.0 353.0 118.5 C354.0 119.0 355.0 119.4 356.1 119.8 C357.1 120.2 358.1 120.7 359.1 121.1 C360.1 121.5 361.1 121.9 362.1 122.3 C363.1 122.6 364.1 122.9 365.2 123.1 C366.2 123.3 367.2 123.5 368.2 123.7 C369.2 123.9 370.2 124.1 371.2 124.2 C372.2 124.4 373.2 124.6 374.2 124.7 C375.3 124.9 376.3 125.0 377.3 125.1 C378.3 125.2 379.3 125.3 380.3 125.3 C381.3 125.4 382.3 125.5 383.3 125.5 C384.4 125.6 385.4 125.6 386.4 125.7 C387.4 125.7 388.9 125.8 389.4 125.8" fill="none" stroke="#2f86f6" stroke-width="2.1" stroke-linecap="round" clip-path="url(#cl)"/>
<path d="M297.4 32.3V126.9" stroke="#2f86f6" stroke-width="2.4"/>
<path d="M297.4 31.9 C295.2 27.3 290.9 24.7 290.9 19.7 A6.5 6.5 0 1 1 303.9 19.7 C303.9 24.7 299.6 27.3 297.4 31.9Z" fill="#2f86f6"/><circle cx="297.4" cy="19.7" r="3.9" fill="#fff"/><circle cx="297.4" cy="19.7" r="2" fill="#2f86f6"/>
<g font-family="Noto Sans CJK SC,Liberation Sans,sans-serif" font-weight="500" font-size="10" fill="#2f86f6" text-anchor="middle"><text x="180.5" y="140.5">0</text><text x="206.4" y="140.5">1</text><text x="233.0" y="140.5">3</text><text x="257.5" y="140.5">15</text><text x="285.3" y="140.5">50</text><text x="311.3" y="140.5">85</text><text x="337.1" y="140.5">97</text><text x="363.1" y="140.5">99</text><text x="387.7" y="140.5">100</text></g></svg></td></tr>
<tr><td class="l">成立日期</td><td>2024<span class="h">-</span>11<span class="h">-</span>28</td></tr>
<tr><td class="l">统一社会信用代码<i class="q">?</i></td><td>91520321MAE66JT74B</td><td class="l">注册资本<i class="q">?</i></td><td>500万人民币</td><td class="l">实缴资本</td><td>-</td></tr>
<tr><td class="l">工商注册号</td><td>520321000927503</td><td class="l">纳税人识别号<i class="q">?</i></td><td>91520321MAE66JT74B</td><td class="l">组织机构代码<i class="q">?</i></td><td>MAE66JT7<span class="h">-</span>4</td></tr>
<tr><td class="l">营业期限</td><td>2024<span class="h">-</span>11<span class="h">-</span>28 至 无固定期限</td><td class="l">纳税人资质</td><td>-</td><td class="l">核准日期</td><td>2024<span class="h">-</span>11<span class="h">-</span>28</td></tr>
<tr><td class="l">企业类型</td><td>有限责任公司（非自然人投资或控股的<br>法人独资）</td><td class="l">行业</td><td>电力、热力生产和供应业</td><td class="l">人员规模</td><td>-</td></tr>
<tr><td class="l">参保人数</td><td>-</td><td class="l">英文名称</td><td colspan="3">-</td></tr>
<tr><td class="l">登记机关</td><td>遵义市播州区市场监督管理局</td><td class="l">注册地址<i class="q">?</i></td><td colspan="3">贵州省遵义市播州区芶江镇苟江大道1号5楼522、523号<a style="margin-left:16px">附近公司</a></td></tr>
<tr><td class="l">经营范围<i class="q">?</i></td><td colspan="5">法律、法规、国务院决定规定禁止的不得经营；法律、法规、国务院决定规定应当许可（审批）的，经审批机关批准后凭许可（审批）文件经营;法律、法规、国务院决<br>定规定无需许可（审批）的，市场主体自主选择经营。（一般项目：发电技术服务；电车销售；新兴能源技术研发；新能源汽车换电设施销售；在线能源计量技术研发；<br>合同能源管理；电池销售；信息系统运行维护服务；对外承包工程；工程管理服务；新能源原动设备制造；电动汽车充电基础设施运营；蓄电池租赁；光伏发电设备租赁<br>；机械设备租赁；新能源汽车电附件销售；新能源汽车整车销售；充电桩销售；集中式快速充电站；汽车销售；智能输配电及控制设备销售；光伏设备及元器件销售；新<br>能源汽车废旧动力蓄电池回收及梯次利用（不含危险废物经营）；新材料技术研发；电子专用材料研发；资源再生利用技术研发；汽车零部件研发；物联网应用服务；大<br>数据服务；互联网数据服务；信息系统集成服务；人工智能行业应用系统集成服务；人工智能应用软件开发；人工智能公共数据平台；人工智能通用应用系统。（除依法<br>须经批准的项目外，凭营业执照依法自主开展经营活动）许可项目：检验检测服务；供电业务。（依法须经批准的项目，经相关部门批准后方可开展经营活动，具体经营<br>项目以相关部门批准文件或许可证件为准））</td></tr>
</table>
</body>
</html>
